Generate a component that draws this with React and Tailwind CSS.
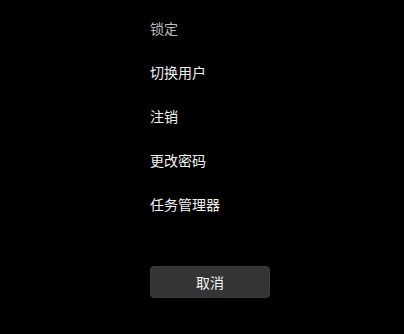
import React from "react";

const options = [
  { label: "锁定", dim: true },
  { label: "切换用户" },
  { label: "注销" },
  { label: "更改密码" },
  { label: "任务管理器" },
];

const SecurityOptions = () => (
  <div
    className="w-full h-[334px] bg-black overflow-hidden"
    style={{ fontFamily: '"Noto Sans CJK SC", "Noto Sans", sans-serif' }}
  >
    <div className="flex flex-col pl-[150px] pt-[6px]">
      {options.map((opt) => (
        <div
          key={opt.label}
          className={`h-[44px] flex items-center text-[14px] leading-none ${
            opt.dim ? "text-[#bcbcbc]" : "text-[#f2f2f2]"
          }`}
        >
          {opt.label}
        </div>
      ))}
      <button className="mt-[40px] w-[120px] h-[32px] rounded-[4px] bg-[#343434] border border-[#3c3c3c] text-[#f5f5f5] text-[14px] leading-none flex items-center justify-center">
        取消
      </button>
    </div>
  </div>
);

export default function App() {
  return <SecurityOptions />;
}
